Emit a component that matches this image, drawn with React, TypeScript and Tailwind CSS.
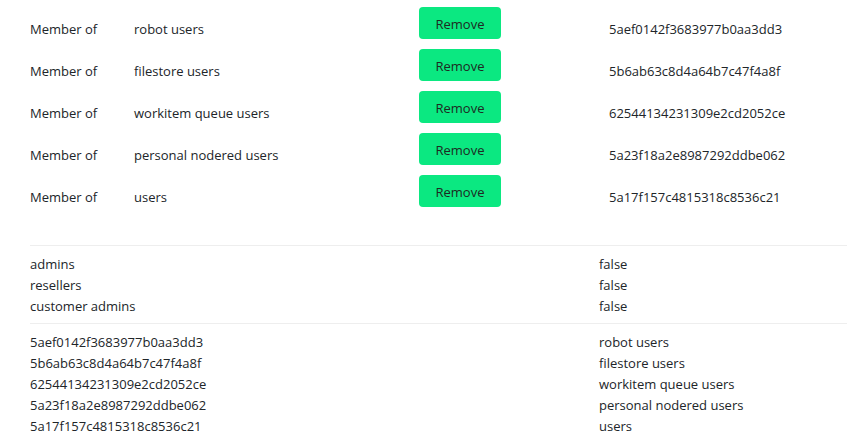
const memberships = [
  { name: "robot users", id: "5aef0142f3683977b0aa3dd3" },
  { name: "filestore users", id: "5b6ab63c8d4a64b7c47f4a8f" },
  { name: "workitem queue users", id: "62544134231309e2cd2052ce" },
  { name: "personal nodered users", id: "5a23f18a2e8987292ddbe062" },
  { name: "users", id: "5a17f157c4815318c8536c21" },
];

const flags = [
  { label: "admins", value: "false" },
  { label: "resellers", value: "false" },
  { label: "customer admins", value: "false" },
];

export default function App() {
  return (
    <div
      className="min-h-[434px] bg-white pl-[30px] pt-[7px] text-[13px] text-[#212529]"
      style={{ fontFamily: '"Open Sans", "Noto Sans", sans-serif' }}
    >
      <div className="flex flex-col">
        {memberships.map((m) => (
          <div key={m.id} className="grid h-[42px] grid-cols-[104px_285px_190px_1fr] items-center">
            <span className="pt-[4px]">Member of</span>
            <span className="pt-[4px]">{m.name}</span>
            <div className="self-start">
              <button className="h-[32px] w-[82px] rounded-[4px] bg-[#0be881] pt-[3px] text-[13px] text-[#1e2a22]">
                Remove
              </button>
            </div>
            <span className="pt-[4px]">{m.id}</span>
          </div>
        ))}
      </div>

      <div className="mb-[8px] mt-[28px] border-t border-[#eeeeee]" />
      <div className="flex flex-col leading-[21px]">
        {flags.map((f) => (
          <div key={f.label} className="grid grid-cols-[569px_1fr]">
            <span>{f.label}</span>
            <span>{f.value}</span>
          </div>
        ))}
      </div>

      <div className="mb-[8px] mt-[6px] border-t border-[#eeeeee]" />
      <div className="flex flex-col leading-[21px]">
        {memberships.map((m) => (
          <div key={m.id} className="grid grid-cols-[569px_1fr]">
            <span>{m.id}</span>
            <span>{m.name}</span>
          </div>
        ))}
      </div>
    </div>
  );
}
